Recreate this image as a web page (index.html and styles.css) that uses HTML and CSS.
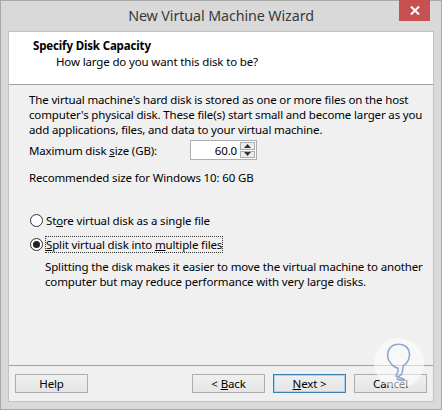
FILE: index.html
```html
<!DOCTYPE html>
<html>
<head>
<meta charset="utf-8">
<link rel="stylesheet" href="styles.css">
</head>
<body>
<div class="window">
  <div class="titlebar">
    <span class="title">New Virtual Machine Wizard</span>
    <div class="close">
      <svg width="10" height="9" viewBox="0 0 10 9"><path d="M1 0.5 L9 8.5 M9 0.5 L1 8.5" stroke="#fff" stroke-width="2"/></svg>
    </div>
  </div>
  <div class="client">
    <div class="header">
      <div class="h-title">Specify Disk Capacity</div>
      <div class="h-sub">How large do you want this disk to be?</div>
    </div>
    <div class="body">
      <p class="intro">The virtual machine's hard disk is stored as one or more files on the host<br>computer's physical disk. These file(s) start small and become larger as you<br>add applications, files, and data to your virtual machine.</p>
      <div class="size-row">
        <span class="size-label">Maximum disk <u>s</u>ize (GB):</span>
        <div class="spin">
          <span class="spin-val">60.0</span>
          <div class="spin-btns">
            <div class="sb"><svg width="7" height="4" viewBox="0 0 7 4"><path d="M0 4 L3.5 0 L7 4Z" fill="#333"/></svg></div>
            <div class="sb"><svg width="7" height="4" viewBox="0 0 7 4"><path d="M0 0 L3.5 4 L7 0Z" fill="#333"/></svg></div>
          </div>
        </div>
      </div>
      <div class="rec">Recommended size for Windows 10: 60 GB</div>
      <div class="radios">
        <div class="radio-row"><span class="radio"></span><span>St<u>o</u>re virtual disk as a single file</span></div>
        <div class="radio-row"><span class="radio checked"></span><span class="focus"><u>S</u>plit virtual disk into <u>m</u>ultiple files</span></div>
        <p class="desc">Splitting the disk makes it easier to move the virtual machine to another<br>computer but may reduce performance with very large disks.</p>
      </div>
    </div>
    <div class="footer">
      <button class="btn">Help</button>
      <div class="spacer"></div>
      <button class="btn">&lt; <u>B</u>ack</button>
      <button class="btn default"><u>N</u>ext &gt;</button>
      <button class="btn">Cancel</button>
    </div>
  </div>
  <div class="watermark">
    <svg width="52" height="52" viewBox="0 0 52 52">
      <circle cx="26" cy="26" r="25" fill="rgba(255,255,255,0.55)"/>
      <path d="M26 39 C31 37 29 33 30 29 C35 26 38 20 36 14 C34 8 27 6 21 8 C14 11 13 20 17 25 C19 29 23 31 25 31 C26 35 24 37 23 39 C26 41 30 41 32 43 C29 44 26 43 24 42" fill="none" stroke="#7e9cc8" stroke-width="1.6" stroke-linecap="round" stroke-linejoin="round" opacity="0.85"/>
    </svg>
  </div>
</div>
</body>
</html>
```
FILE: styles.css
```css
* { box-sizing: border-box; }
html, body { margin: 0; padding: 0; }
body {
  width: 442px;
  height: 410px;
  overflow: hidden;
  font-family: "Noto Sans", "DejaVu Sans", sans-serif;
  font-size: 11.5px;
  letter-spacing: -0.15px;
  color: #000;
}
.window {
  position: relative;
  width: 442px;
  height: 410px;
  background: #d9d9d9;
  border: 1px solid #a9a9a9;
  padding: 0 7px 7px 7px;
  display: flex;
  flex-direction: column;
}
.titlebar {
  height: 30px;
  display: flex;
  align-items: center;
  justify-content: center;
  position: relative;
  flex-shrink: 0;
}
.title {
  font-family: "Noto Sans", sans-serif;
  font-size: 14.3px;
  letter-spacing: -0.1px;
  color: #3a3a3a;
  margin-top: -2px;
}
.close {
  position: absolute;
  right: 4px;
  top: -1px;
  width: 31px;
  height: 21px;
  background: #c75050;
  display: flex;
  align-items: center;
  justify-content: center;
}
.client {
  flex: 1;
  background: #f0f0f0;
  border: 1px solid #c2c2c2;
  display: flex;
  flex-direction: column;
}
.header {
  background: #fff;
  height: 53px;
  border-bottom: 1px solid #a0a0a0;
  padding: 6px 0 0 24px;
  flex-shrink: 0;
}
.h-title {
  font-weight: bold;
  line-height: 16px;
}
.h-sub {
  padding-left: 23px;
  line-height: 16px;
}
.body {
  flex: 1;
  padding: 7px 10px 0 20px;
}
.intro {
  margin: 0;
  line-height: 15px;
  white-space: nowrap;
}
.size-row {
  display: flex;
  align-items: center;
  margin-top: 3px;
  height: 20px;
}
.size-label { width: 161px; }
.spin {
  width: 67px;
  height: 20px;
  background: #fff;
  border: 1px solid #abadb3;
  display: flex;
  align-items: center;
}
.spin-val {
  flex: 1;
  text-align: right;
  padding-right: 3px;
}
.spin-btns {
  width: 16px;
  height: 18px;
  display: flex;
  flex-direction: column;
  gap: 1px;
  padding: 1px 1px 1px 0;
}
.sb {
  flex: 1;
  border: 1px solid #acacac;
  background: #ececec;
  display: flex;
  align-items: center;
  justify-content: center;
}
.rec {
  margin-top: 10px;
  line-height: 15px;
}
.radios { margin-top: 27px; }
.radio-row {
  display: flex;
  align-items: center;
  height: 16px;
  margin-bottom: 8px;
}
.radio {
  width: 13px;
  height: 13px;
  border-radius: 50%;
  border: 1px solid #333;
  background: #fff;
  margin: 0 3px 0 1px;
  display: flex;
  align-items: center;
  justify-content: center;
}
.radio.checked::after {
  content: "";
  width: 7px;
  height: 7px;
  border-radius: 50%;
  background: #222;
}
.focus { outline: 1px dotted #333; }
.desc {
  margin: -1px 0 0 16px;
  line-height: 15px;
  white-space: nowrap;
}
.footer {
  height: 36px;
  border-top: 1px solid #a0a0a0;
  display: flex;
  align-items: center;
  padding: 0 6px;
  gap: 8px;
  flex-shrink: 0;
}
.spacer { flex: 1; }
.btn {
  width: 73px;
  height: 19px;
  font-family: "Noto Sans", sans-serif;
  font-size: 11.5px;
  letter-spacing: -0.15px;
  background: linear-gradient(#f0f0f0, #e5e5e5);
  border: 1px solid #acacac;
  padding: 0;
  color: #000;
  line-height: 15px;
}
.btn.default {
  border-color: #3c7fb1;
  box-shadow: inset 0 0 0 1px #a7d7f7;
}
.watermark {
  position: absolute;
  left: 372px;
  top: 336px;
  width: 52px;
  height: 52px;
}
```
